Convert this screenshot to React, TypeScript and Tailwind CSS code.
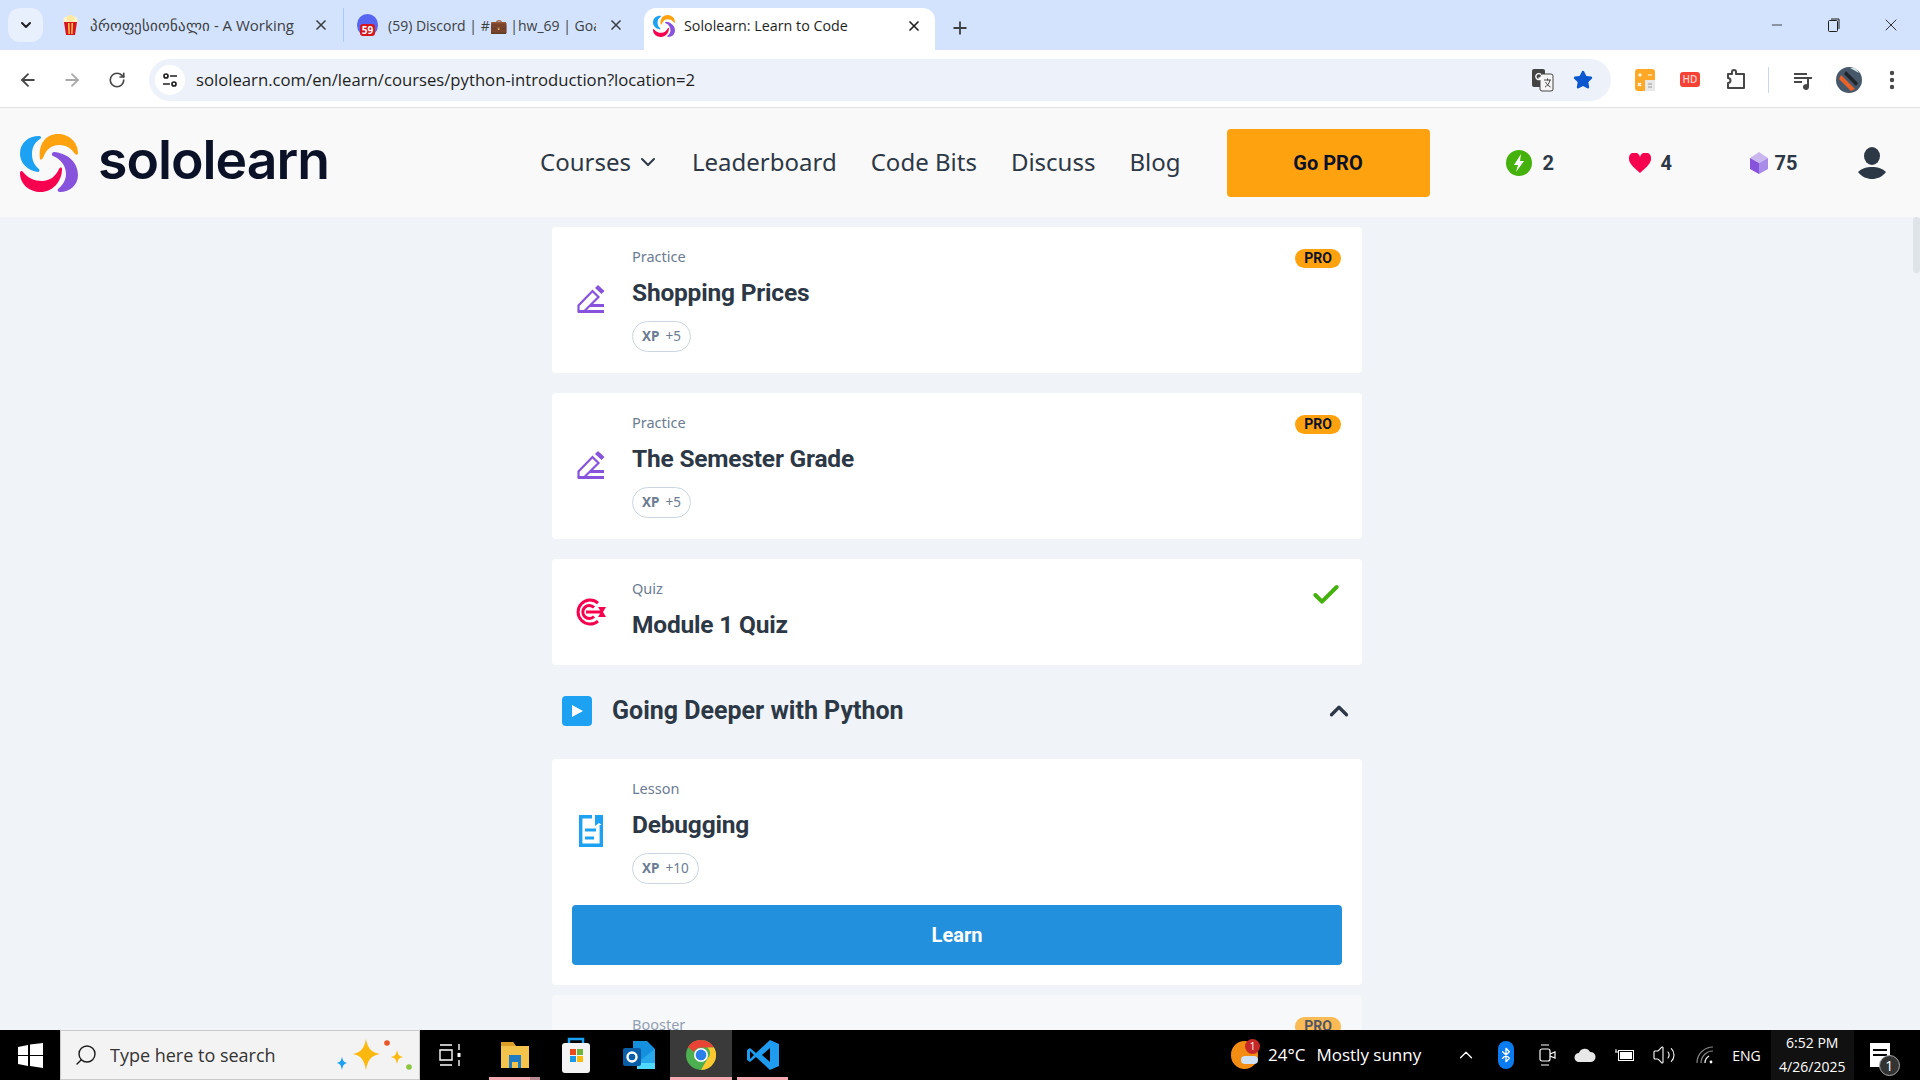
import { ChevronDown, ChevronUp, ArrowLeft, ArrowRight, RotateCw, X, Plus, Minus, Star, EllipsisVertical, Search, Check, Volume2, Bluetooth } from 'lucide-react'

const LogoMark = ({ size = 58 }: { size?: number }) => (
  <svg width={size} height={size} viewBox="0 0 58 58">
    <path d="M19 2C8 2 0 9 0 20c0 9 8 17 18 18 1 0 2-2 1-3-5-4-7-9-7-15 0-7 3-12 8-15 2-1 1-3-1-3z" fill="#1da1f2" />
    <path d="M20 25C18 10 26 0 38 0c11 0 20 8 20 19 0 2-2 2-3 1-4-6-9-9-16-9-8 0-13 5-16 13-1 2-3 2-3 1z" fill="#ffa20f" />
    <path d="M34 18c13 1 24 10 24 23 0 10-8 17-18 17-2 0-3-2-2-3 5-4 8-9 8-15 0-8-5-15-13-18-2-1-1-4 1-4z" fill="#8753dc" />
    <path d="M0 39c0 11 9 19 21 19 11 0 21-10 21-23 0-2-2-2-3 0-3 7-9 12-17 12-8 0-14-3-19-9-1-2-3-1-3 1z" fill="#f7024f" />
  </svg>
)

const PencilIcon = () => (
  <svg width="28" height="28" viewBox="0 0 28 28" fill="none">
    <path d="M1.500 26.500V20.500L15.500 6 21.500 12 7 26.500z" stroke="#8753dc" strokeWidth="2.200" />
    <path d="M18 3l3-3 6.500 6-3 3z" fill="#8753dc" />
    <path d="M13 20.500h14M1 26.500h26" stroke="#8753dc" strokeWidth="2.800" />
  </svg>
)

const TargetIcon = () => (
  <svg width="32" height="28" viewBox="0 0 32 28" fill="none">
    <path d="M23 5A12 12 0 1 0 23 23" stroke="#f7024f" strokeWidth="3" />
    <path d="M19 9.500A6.500 6.500 0 1 0 19 18.500" stroke="#f7024f" strokeWidth="3" />
    <path d="M11 14h15" stroke="#f7024f" strokeWidth="3" />
    <path d="M23 9l8 0-3 5 3 5-8 0 3-5z" fill="#f7024f" />
  </svg>
)

const DocIcon = () => (
  <svg width="24" height="32" viewBox="0 0 24 32" fill="none">
    <path d="M13 1.700H1.700v28.600h20.600V10" stroke="#1da1f2" strokeWidth="3.400" />
    <path d="M16 0h8v11l-4-3-4 3z" fill="#1da1f2" />
    <path d="M6 15h11M6 23h9" stroke="#1da1f2" strokeWidth="3" />
  </svg>
)

const XpPill = ({ value }: { value: string }) => (
  <div className="flex h-[31px] w-fit items-center gap-[6px] rounded-full border border-[#cbd5e0] px-[9px] text-[13.500px] text-[#6b7c93]">
    <span className="font-bold">XP</span>
    <span>{value}</span>
  </div>
)

const ProBadge = () => (
  <span className="mr-[1px] mt-[3px] flex h-[19px] w-[46px] items-center justify-center rounded-full bg-[#ffa20f] font-['Roboto',sans-serif] text-[14px] font-bold text-[#0b1228]">PRO</span>
)

interface RowProps {
  label: string
  title: string
  xp?: string
  icon: React.ReactNode
  pro?: boolean
  done?: boolean
}

const LessonRow = ({ label, title, xp, icon, pro, done }: RowProps) => (
  <div className="flex">
    <div className="flex w-[60px] shrink-0 items-center justify-center pr-[22px]">{icon}</div>
    <div className="flex-1">
      <div className="text-[14.500px] leading-[20px] text-[#6b7c93]">{label}</div>
      <div className="mt-[7px] h-[40px] font-['Roboto',sans-serif] text-[24.500px] font-bold leading-[40px] tracking-[-0.2px] text-[#2d3846]">{title}</div>
      {xp && <div className="mt-[8px]"><XpPill value={xp} /></div>}
    </div>
    {pro && <ProBadge />}
    {done && <Check className="mt-[1px] h-[32px] w-[32px] text-[#44b10c]" strokeWidth={3} />}
  </div>
)

const Card = ({ children, className }: { children: React.ReactNode; className: string }) => (
  <div className={`rounded-[4px] bg-white px-[20px] ${className}`}>{children}</div>
)

const PopcornIcon = () => (
  <svg width="15" height="20" viewBox="0 0 15 20">
    <circle cx="4" cy="5" r="3.500" fill="#fff3c4" />
    <circle cx="11" cy="5" r="3.500" fill="#fff3c4" />
    <circle cx="7.500" cy="3.500" r="3.500" fill="#ffe9a0" />
    <path d="M1 7h13l-2 13H3z" fill="#d8141c" />
    <path d="M5 8h1.500l.3 11H5.500zM8.500 8H10l-.5 11H8.200z" fill="#ffd54f" />
  </svg>
)

const StoreIcon = () => (
  <svg width="30" height="38" viewBox="0 0 30 38">
    <path d="M8 8V3h14v5" fill="none" stroke="#1da1f2" strokeWidth="2.500" />
    <rect x="1" y="7" width="28" height="30" rx="3" fill="#f4f4f4" />
    <rect x="9" y="13" width="6" height="6" fill="#e8491d" />
    <rect x="16" y="13" width="6" height="6" fill="#6fb33a" />
    <rect x="9" y="20" width="6" height="6" fill="#1a9ae8" />
    <rect x="16" y="20" width="6" height="6" fill="#fbbc09" />
  </svg>
)

const ChromeIcon = ({ size = 30 }: { size?: number }) => (
  <svg width={size} height={size} viewBox="0 0 30 30">
    <circle cx="15" cy="15" r="15" fill="#4caf50" />
    <path d="M15 0a15 15 0 0 1 13 7.500H15a7.500 7.500 0 0 0-7 4.600L2 7A15 15 0 0 1 15 0z" fill="#e94335" />
    <path d="M28 7.500A15 15 0 0 1 15 30l6.500-11.200a7.500 7.500 0 0 0 0-11.300z" fill="#fdc82f" />
    <circle cx="15" cy="15" r="7" fill="#fff" />
    <circle cx="15" cy="15" r="5.400" fill="#2b7de9" />
  </svg>
)

const ProfileAvatar = () => (
  <svg className="ml-[23px]" width="26" height="26" viewBox="0 0 26 26">
    <circle cx="13" cy="13" r="13" fill="#46586a" />
    <path d="M5 8l14 14-4 2L3 12z" fill="#e8622a" />
    <path d="M10 4l12 12-2 3L8 7z" fill="#20252b" />
    <path d="M14 1h6l3 5z" fill="#cfe3dc" />
  </svg>
)

const TaskbarSearch = () => (
  <div className="flex h-[50px] w-[360px] items-center border border-[#c9c9c9] bg-[#f3f3f3] pl-[13px]">
    <Search className="h-[24px] w-[24px] -scale-x-100 text-[#1c1c1c]" strokeWidth={1.400} />
    <span className="ml-[12px] text-[18px] text-[#333]">Type here to search</span>
    <svg className="ml-[60px]" width="80" height="40" viewBox="0 0 80 40">
      <path d="M30 4c2 10 5 13 14 15-9 2-12 5-14 16-2-11-5-14-13-16 8-2 11-5 13-15z" fill="#fcb80f" />
      <path d="M61 15c1 5 2 6 6 7-4 1-5 2-6 7-1-5-2-6-6-7 4-1 5-2 6-7z" fill="#fcb80f" />
      <path d="M6 22c1 4 2 5 5 6-3 1-4 2-5 7-1-5-2-6-5-7 3-1 4-2 5-6z" fill="#1da1f2" />
      <circle cx="51" cy="8" r="2.800" fill="#e8562a" />
      <circle cx="73" cy="32" r="2.800" fill="#8cc63f" />
    </svg>
  </div>
)

export default function App() {
  return (
    <div className="flex h-screen w-full flex-col overflow-hidden bg-[#f0f4f8] font-['Noto_Sans',sans-serif]">
      {/* Tab strip */}
      <div className="flex h-[50px] shrink-0 items-end bg-[#d3e3fd] pl-[8px] font-['Open_Sans',sans-serif] text-[14px] text-[#3c4043]">
        <div className="mb-[8px] flex h-[34px] w-[35px] items-center justify-center rounded-[12px] bg-[#e8effd]">
          <ChevronDown className="h-[16px] w-[16px] text-[#1f1f1f]" strokeWidth={3} />
        </div>
        <div className="mb-[8px] ml-[20px] flex h-[34px] w-[281px] items-center border-r border-[#a8c7fa]">
          <PopcornIcon />
          <span className="ml-[12px] w-[205px] overflow-hidden whitespace-nowrap text-[15px]">პროფესიონალი - A Working</span>
          <X className="ml-[18px] h-[16px] w-[16px] text-[#3c4043]" strokeWidth={2.500} />
        </div>
        <div className="mb-[8px] ml-[13px] flex h-[34px] w-[274px] items-center">
          <span className="flex h-[22px] w-[21px] items-end justify-center rounded-full bg-[#5865f2]">
            <span className="rounded-[3px] bg-[#d8141c] px-[2px] text-[10px] font-bold leading-[12px] text-white">59</span>
          </span>
          <span className="ml-[10px] flex w-[208px] items-center overflow-hidden whitespace-nowrap">(59) Discord | #💼 |hw_69 | Goals</span>
          <X className="ml-[12px] h-[16px] w-[16px] text-[#3c4043]" strokeWidth={2.500} />
        </div>
        <div className="ml-[13px] flex h-[42px] w-[291px] items-center rounded-t-[12px] bg-white pb-[6px] pl-[9px] text-[14.300px] text-[#1f1f1f]">
          <LogoMark size={22} />
          <span className="ml-[9px] w-[222px] whitespace-nowrap">Sololearn: Learn to Code</span>
          <X className="h-[16px] w-[16px] text-[#1f1f1f]" strokeWidth={2.500} />
        </div>
        <Plus className="mb-[12px] ml-[15px] h-[20px] w-[20px] text-[#3c4043]" strokeWidth={2.200} />
        <div className="mb-[15px] ml-auto flex items-center text-[#1f1f1f]">
          <Minus className="h-[16px] w-[16px]" strokeWidth={1.200} />
          <svg className="ml-[43px]" width="12" height="14" viewBox="0 0 12 14" fill="none" stroke="#1f1f1f">
            <rect x="0.500" y="2.500" width="9" height="11" rx="1" />
            <path d="M3 1h8v10" />
          </svg>
          <X className="ml-[41px] mr-[19px] h-[20px] w-[20px]" strokeWidth={1.100} />
        </div>
      </div>

      {/* Browser toolbar */}
      <div className="flex h-[58px] shrink-0 items-center border-b border-[#dfe1e5] bg-white pl-[18px] pt-[2px]">
        <ArrowLeft className="h-[20px] w-[20px] text-[#474747]" strokeWidth={2.200} />
        <ArrowRight className="ml-[24px] h-[20px] w-[20px] text-[#a9a9a9]" strokeWidth={2.200} />
        <RotateCw className="ml-[26px] h-[18px] w-[18px] text-[#474747]" strokeWidth={2.200} />
        <div className="ml-[23px] flex h-[42px] w-[1462px] items-center rounded-full bg-[#edf2fa] pl-[6px]">
          <span className="flex h-[30px] w-[30px] items-center justify-center rounded-full bg-white">
            <svg width="16" height="16" viewBox="0 0 16 16" fill="none" stroke="#1f1f1f" strokeWidth="1.700">
              <circle cx="4" cy="4" r="2" /><path d="M8 4h7M1 12h7" /><circle cx="12" cy="12" r="2" />
            </svg>
          </span>
          <span className="ml-[11px] font-['Open_Sans',sans-serif] text-[16.700px] text-[#1f1f1f]">sololearn.com/en/learn/courses/python-introduction?location=2</span>
          <svg className="ml-auto" width="22" height="24" viewBox="0 0 22 24">
            <rect x="0" y="1" width="13" height="18" rx="2" fill="#444" />
            <rect x="8" y="6" width="13" height="17" rx="2" fill="#f5f5f5" stroke="#444" />
            <path d="M9 6.500A3 3 0 1 0 9.500 10H6.500" fill="none" stroke="#fff" strokeWidth="1.400" />
            <path d="M12 12h7M15.500 10.500v2M18 12c-1 4-3 6-5 7M13.500 14c1 2 3 4 5 5" fill="none" stroke="#444" />
          </svg>
          <Star className="ml-[19px] mr-[18px] h-[20px] w-[20px] fill-[#0b57d0] text-[#0b57d0]" />
        </div>
        <svg className="ml-[24px]" width="20" height="22" viewBox="0 0 20 22">
          <rect width="20" height="22" rx="3" fill="#ffa726" />
          <rect x="10" y="11" width="10" height="11" fill="#e8e8e8" />
          <path d="M3 6h4M5 4v4M13 6h4M3 14l3 3M6 14l-3 3" stroke="#fff" strokeWidth="1.200" />
          <path d="M13 15h4M13 18h4" stroke="#999" strokeWidth="1.200" />
        </svg>
        <span className="ml-[25px] flex h-[15px] w-[20px] items-center justify-center rounded-[3px] bg-[#f44336] font-['Open_Sans',sans-serif] text-[10px] font-semibold text-[#ffd0cc]">HD</span>
        <svg className="ml-[26px]" width="20" height="22" viewBox="0 0 20 22" fill="none" stroke="#474747" strokeWidth="2">
          <path d="M2 5h4V3a2 2 0 0 1 4 0v2h8v14H2v-5a2.500 2.500 0 0 0 0-5z" strokeLinejoin="round" />
        </svg>
        <span className="ml-[22px] h-[26px] w-px bg-[#c7d7f0]" />
        <svg className="ml-[24px]" width="20" height="20" viewBox="0 0 20 20" fill="#474747">
          <path d="M1 3h13v2H1zM1 7h13v2H1zM1 11h8v2H1z" />
          <path d="M14 7h5v2h-3v8a3 3 0 1 1-2-2.800z" />
        </svg>
        <ProfileAvatar />
        <EllipsisVertical className="ml-[18px] h-[24px] w-[24px] text-[#474747]" strokeWidth={2.400} />
      </div>

      {/* Site header */}
      <header className="flex h-[109px] shrink-0 items-center bg-[#f9f9f9] pl-[20px]">
        <LogoMark />
        <span className="ml-[20px] w-[250px] pb-[6px] font-['Inter',sans-serif] text-[53.500px] font-semibold leading-none tracking-[-1px] text-[#0b1228]">sololearn</span>
        <nav className="ml-[192px] flex items-center pb-[2px] text-[24px] text-[#2d3846]">
          <span>Courses</span>
          <ChevronDown className="ml-[5px] h-[24px] w-[24px]" strokeWidth={2} />
          <span className="ml-[32px]">Leaderboard</span>
          <span className="ml-[34px]">Code Bits</span>
          <span className="ml-[34px]">Discuss</span>
          <span className="ml-[34px]">Blog</span>
        </nav>
        <button className="ml-[46px] h-[68px] w-[203px] rounded-[4px] bg-[#ffa20f] font-['Roboto',sans-serif] text-[20px] font-bold text-[#0b1228]">Go PRO</button>
        <div className="ml-[76px] flex w-[123px] items-center font-['Roboto',sans-serif] text-[20px] font-bold text-[#2d3846]">
          <svg width="26" height="26" viewBox="0 0 26 26">
            <circle cx="13" cy="13" r="13" fill="#44b10c" />
            <path d="M15 4l-7 11h4l-2 7 8-11h-4z" fill="#fff" />
          </svg>
          <span className="ml-[11px]">2</span>
        </div>
        <div className="flex w-[121px] items-center font-['Roboto',sans-serif] text-[20px] font-bold text-[#2d3846]">
          <svg width="22" height="20" viewBox="0 0 22 20">
            <path d="M11 20C4 14 0 10 0 6a5.500 5.500 0 0 1 11-2 5.500 5.500 0 0 1 11 2c0 4-4 8-11 14z" fill="#f7024f" />
          </svg>
          <span className="ml-[10px]">4</span>
        </div>
        <div className="flex w-[108px] items-center font-['Roboto',sans-serif] text-[20px] font-bold text-[#2d3846]">
          <svg width="18" height="22" viewBox="0 0 18 22">
            <path d="M9 0l9 6-9 5-9-5z" fill="#cbb7f0" />
            <path d="M0 6l9 5v11l-9-5z" fill="#8753dc" />
            <path d="M18 6l-9 5v11l9-5z" fill="#a98bea" />
          </svg>
          <span className="ml-[7px]">75</span>
        </div>
        <svg width="28" height="32" viewBox="0 0 28 32" fill="#2d3846">
          <ellipse cx="14" cy="9" rx="8" ry="9" />
          <path d="M0 25c4-4 9-5 14-5s10 1 14 5c-4 5-9 7-14 7s-10-2-14-7z" />
        </svg>
      </header>

      {/* Course content */}
      <main className="relative flex min-h-0 flex-1 flex-col items-center overflow-hidden pr-[6px] pt-[10px]">
        <div className="absolute right-0 top-0 h-[56px] w-[7px] rounded-full bg-[#dfe4e9]" />
        <div className="flex w-[810px] flex-col">
          <Card className="h-[146px] pt-[19px]">
            <LessonRow label="Practice" title="Shopping Prices" xp="+5" icon={<PencilIcon />} pro />
          </Card>
          <Card className="mt-[20px] h-[146px] pt-[19px]">
            <LessonRow label="Practice" title="The Semester Grade" xp="+5" icon={<PencilIcon />} pro />
          </Card>
          <Card className="mt-[20px] h-[106px] pt-[19px]">
            <LessonRow label="Quiz" title="Module 1 Quiz" icon={<TargetIcon />} done />
          </Card>
          <div className="mt-[31px] flex h-[30px] items-center pl-[10px] pr-[8px]">
            <span className="flex h-[30px] w-[30px] items-center justify-center rounded-[4px] bg-[#1da1f2]">
              <svg width="12" height="12" viewBox="0 0 12 12"><path d="M1 0l11 6-11 6z" fill="#fff" /></svg>
            </span>
            <span className="ml-[20px] font-['Roboto',sans-serif] text-[25px] font-bold text-[#2d3846]">Going Deeper with Python</span>
            <ChevronUp className="ml-auto h-[30px] w-[30px] text-[#2d3846]" strokeWidth={2.600} />
          </div>
          <Card className="mt-[33px] h-[226px] pt-[19px]">
            <LessonRow label="Lesson" title="Debugging" xp="+10" icon={<DocIcon />} />
            <button className="mt-[21px] h-[60px] w-full rounded-[4px] bg-[#2390dd] font-['Roboto',sans-serif] text-[20px] font-bold text-white">Learn</button>
          </Card>
          <div className="mt-[10px] flex h-[60px] rounded-[4px] bg-[#f9fafb] px-[20px] pt-[19px] opacity-70">
            <div className="flex w-full">
              <span className="ml-[60px] flex-1 text-[14.500px] leading-[20px] text-[#6b7c93]">Booster</span>
              <ProBadge />
            </div>
          </div>
        </div>
      </main>

      {/* Windows taskbar */}
      <footer className="flex h-[50px] shrink-0 items-center bg-black font-['Open_Sans',sans-serif] text-white">
        <svg className="ml-[18px] mr-[17px]" width="25" height="25" viewBox="0 0 25 25" fill="#fff">
          <path d="M0 4l10-2v10H0zM12 1.500L25 0v12H12zM0 13h10v10L0 21zM12 13h13v12l-13-2z" />
        </svg>
        <TaskbarSearch />
        <svg className="ml-[19px]" width="22" height="24" viewBox="0 0 22 24" fill="none" stroke="#fff" strokeWidth="1.400">
          <path d="M1 2h12M1 22h12M1 7h12v10H1zM20 1v6M20 17v6" />
          <path d="M20 10v4" strokeWidth="3" />
        </svg>
        <span className="relative ml-[28px] flex h-[50px] w-[51px] items-center justify-center">
          <svg width="28" height="32" viewBox="0 0 28 32">
            <path d="M0 3h12l3 4h13v22H0z" fill="#f3c34b" />
            <path d="M0 3h12l2 4H0z" fill="#dd9d26" />
            <path d="M8 16h12v13h-3v-6h-6v6H8z" fill="#1f7cc4" />
          </svg>
          <span className="absolute bottom-0 left-0 h-[3px] w-[41px] bg-[#f5a9b0]" />
          <span className="absolute bottom-0 right-0 h-[3px] w-[10px] bg-[#b78a90]" />
        </span>
        <span className="ml-[21px]"><StoreIcon /></span>
        <span className="ml-[32px]">
          <svg width="32" height="32" viewBox="0 0 32 32">
            <path d="M10 2h14l8 8v14H10z" fill="#1490df" />
            <path d="M32 10v14H14z" fill="#28a8ea" />
            <path d="M14 24h18v6H14z" fill="#50d9ff" />
            <rect x="0" y="9" width="18" height="18" rx="2" fill="#0a5ea8" />
            <circle cx="9" cy="18" r="4.500" fill="none" stroke="#fff" strokeWidth="2.400" />
          </svg>
        </span>
        <span className="relative ml-[15px] flex h-[50px] w-[62px] items-center justify-center bg-[#3a3a3a]">
          <ChromeIcon />
          <span className="absolute bottom-0 left-0 h-[3px] w-full bg-[#f5a9b0]" />
        </span>
        <span className="relative ml-[5px] flex h-[50px] w-[51px] items-center justify-center">
          <svg width="32" height="32" viewBox="0 0 32 32">
            <path d="M23 1l9 4v22l-9 4L9 18l-6 5-3-2v-10l3-2 6 5z" fill="#1f9cf0" />
            <path d="M23 9l-8 7 8 7z" fill="#000" />
            <path d="M3 12l4 4-4 4z" fill="#000" />
          </svg>
          <span className="absolute bottom-0 left-0 h-[3px] w-full bg-[#f5a9b0]" />
        </span>

        <span className="relative ml-[443px] block h-[28px] w-[27px] rounded-full bg-[#f28c13]">
          <span className="absolute -right-[2px] -top-[2px] flex h-[15px] w-[15px] items-center justify-center rounded-full bg-[#c62828] text-[10px]">1</span>
          <span className="absolute bottom-[5px] right-0 h-[8px] w-[17px] rounded-full bg-[#cfe2f5]" />
        </span>
        <span className="ml-[10px] whitespace-nowrap text-[17px]">24°C</span>
        <span className="ml-[11px] whitespace-nowrap text-[17px]">Mostly sunny</span>
        <ChevronUp className="ml-[34px] h-[22px] w-[22px]" strokeWidth={1.400} />
        <span className="ml-[21px] flex h-[28px] w-[16px] items-center justify-center rounded-full bg-[#0a7cf0]">
          <Bluetooth className="h-[16px] w-[16px]" strokeWidth={2} />
        </span>
        <svg className="ml-[24px]" width="18" height="24" viewBox="0 0 18 24" fill="none" stroke="#fff" strokeWidth="1.200">
          <rect x="2" y="6" width="10" height="12" rx="2" />
          <path d="M12 11l5-2v6l-5-2M3 2h8M3 22h8" />
        </svg>
        <svg className="ml-[18px]" width="22" height="14" viewBox="0 0 22 14" fill="#e8e8e8">
          <path d="M5 14a4.500 4.500 0 0 1 0-9 6 6 0 0 1 11-1 5 5 0 0 1 1 10z" />
        </svg>
        <svg className="ml-[19px]" width="20" height="14" viewBox="0 0 20 14">
          <rect x="3.500" y="2.500" width="15" height="10" fill="none" stroke="#fff" />
          <rect x="5" y="4" width="12" height="7" fill="#fff" />
          <path d="M0 4h3M1 1v3" stroke="#fff" />
        </svg>
        <Volume2 className="ml-[17px] h-[24px] w-[24px]" strokeWidth={1.100} />
        <svg className="ml-[20px]" width="18" height="18" viewBox="0 0 18 18" fill="none" stroke="#888" strokeWidth="1.200">
          <path d="M1 17A16 16 0 0 1 17 1M5 17A12 12 0 0 1 17 5" />
          <path d="M9 17a8 8 0 0 1 4-7" stroke="#fff" />
          <circle cx="15" cy="16" r="1.400" fill="#fff" stroke="none" />
        </svg>
        <span className="ml-[18px] text-[14px]">ENG</span>
        <div className="ml-[10px] flex h-[50px] w-[83px] flex-col items-center justify-center bg-[#111] text-[14px] leading-[24px]">
          <span>6:52 PM</span>
          <span>4/26/2025</span>
        </div>
        <span className="relative ml-[16px] block h-[24px] w-[20px] bg-white">
          <span className="absolute left-[3px] top-[6px] h-[2px] w-[14px] bg-black" />
          <span className="absolute left-[3px] top-[11px] h-[2px] w-[14px] bg-black" />
          <span className="absolute -bottom-[9px] -right-[10px] flex h-[21px] w-[21px] items-center justify-center rounded-full border border-[#aaa] bg-[#333] text-[14px]">1</span>
        </span>
      </footer>
    </div>
  )
}
